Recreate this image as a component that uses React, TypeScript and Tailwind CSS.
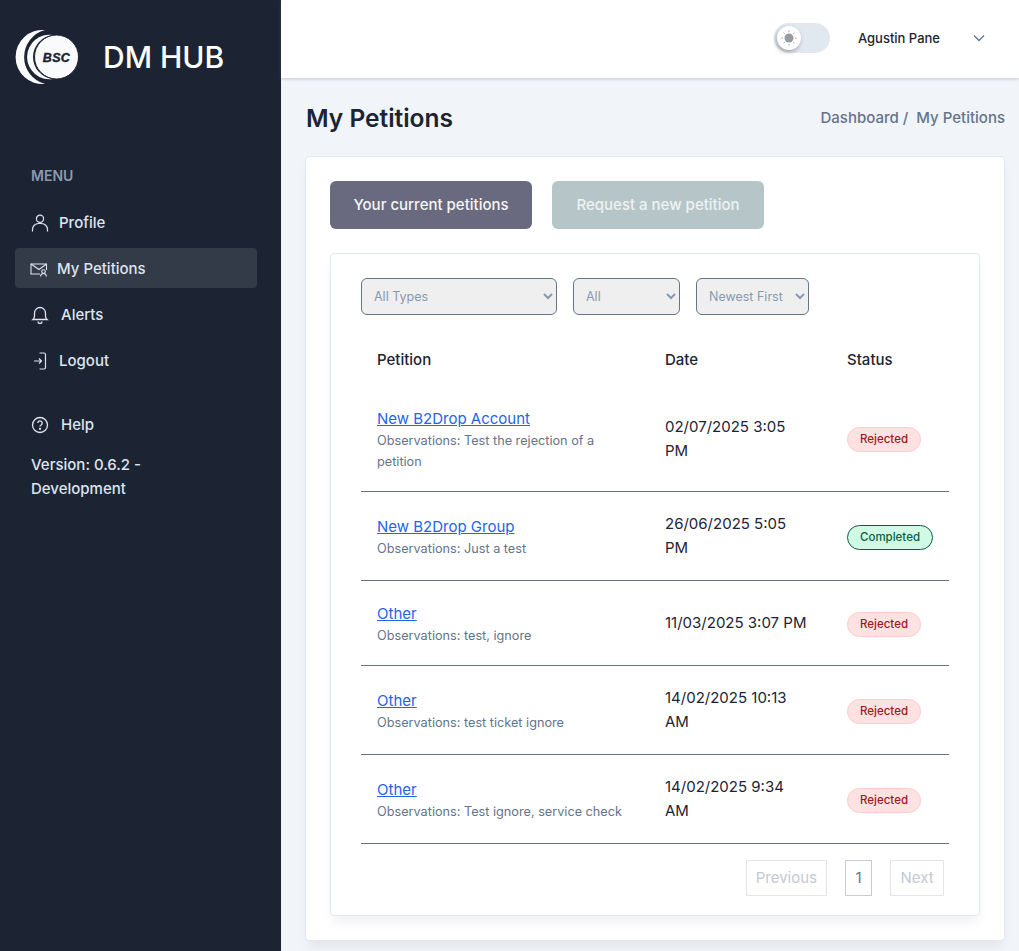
const font = "font-['Inter',sans-serif]";

const rows = [
  { name: "New B2Drop Account", obs: "Observations: Test the rejection of a petition", date: "02/07/2025 3:05 PM", status: "Rejected" },
  { name: "New B2Drop Group", obs: "Observations: Just a test", date: "26/06/2025 5:05 PM", status: "Completed" },
  { name: "Other", obs: "Observations: test, ignore", date: "11/03/2025 3:07 PM", status: "Rejected" },
  { name: "Other", obs: "Observations: test ticket ignore", date: "14/02/2025 10:13 AM", status: "Rejected" },
  { name: "Other", obs: "Observations: Test ignore, service check", date: "14/02/2025 9:34 AM", status: "Rejected" },
];

const Logo = () => (
  <svg width="64" height="56" viewBox="0 0 64 56" className="shrink-0">
    <path d="M30 1 A27.1 27.1 0 1 0 30 55 A27.9 27.900 0 0 1 30 1 Z" fill="#f9fafb" />
    <path d="M38 6 A22.3 22.300 0 1 0 38 50 A22.1 22.100 0 0 1 38 6 Z" fill="#f9fafb" />
    <circle cx="41.5" cy="28" r="22" fill="#f9fafb" stroke="#1c2434" strokeWidth="1" />
    <text x="41.5" y="32.500" textAnchor="middle" fontFamily="Liberation Sans" fontWeight="700" fontStyle="italic" fontSize="12.500" letterSpacing="0.4" stroke="#1c2434" strokeWidth="0.4" fill="#1c2434">BSC</text>
  </svg>
);

const IconUser = () => (
  <svg width="18" height="18" viewBox="0 0 18 18" fill="none" stroke="#dee4ee" strokeWidth="1.2">
    <circle cx="9" cy="4.800" r="3.600" />
    <path d="M1.500 17.500v-2a6 6 0 0 1 6-6h3a6 6 0 0 1 6 6v2" />
  </svg>
);

const IconPetition = () => (
  <svg width="18" height="18" viewBox="0 0 18 18" fill="none" stroke="#dee4ee" strokeWidth="1.1" className="-ml-px">
    <path d="M10 14H1V4h15.500v6" />
    <path d="M1 4l8 5.500L16.500 4" />
    <circle cx="13.500" cy="11.500" r="1.800" />
    <path d="M10.500 16.500c.3-2 1.300-3 3-3s2.700 1 3 3" />
  </svg>
);

const IconBell = () => (
  <svg width="18" height="18" viewBox="0 0 18 18" fill="none" stroke="#dee4ee" strokeWidth="1.3">
    <path d="M2 13.500c1.200-1 1.500-2 1.500-3.500V7a5.500 5.500 0 0 1 11 0v3c0 1.500.3 2.500 1.500 3.500z" />
    <path d="M7 15.500a2 2 0 0 0 4 0" />
  </svg>
);

const IconLogout = () => (
  <svg width="18" height="18" viewBox="0 0 18 18" fill="none" stroke="#dee4ee" strokeWidth="1.2">
    <path d="M8.500 1h4.500a1.500 1.500 0 0 1 1.500 1.500v13a1.500 1.500 0 0 1-1.500 1.500H8.500" />
    <path d="M3 9h7.500M8 6.500L10.500 9 8 11.500" />
  </svg>
);

const IconHelp = () => (
  <svg width="18" height="18" viewBox="0 0 18 18" fill="none" stroke="#dee4ee" strokeWidth="1.3">
    <circle cx="9" cy="9" r="7.500" />
    <path d="M6.800 7a2.200 2.200 0 1 1 3.300 2c-.8.400-1.100.9-1.100 1.600" />
    <circle cx="9" cy="12.800" r=".5" fill="#dee4ee" />
  </svg>
);

const NavItem = ({ icon, label, gap, active }: { icon: React.ReactNode; label: string; gap: string; active?: boolean }) => (
  <a className={`flex h-[40px] items-center rounded-sm px-4 pt-[2px] text-[15px] font-medium text-[#dee4ee] ${gap} ${active ? "bg-[#333a48]" : ""}`}>
    {icon}
    {label}
  </a>
);

const Badge = ({ status }: { status: string }) =>
  status === "Completed" ? (
    <span className="inline-block rounded-full border border-[#065f46] bg-[#d1fae5] px-3 py-[2px] text-[11.5px] font-medium leading-[19px] text-[#065f46]">
      {status}
    </span>
  ) : (
    <span className="inline-block rounded-full border border-[#fecaca] bg-[#fee2e2] px-3 py-[2px] text-[11.5px] font-medium leading-[19px] text-[#991b1b]">
      {status}
    </span>
  );

const selectClass = "h-[37px] rounded-md border border-[#64748b] bg-[#efefef] pl-2 text-[12.5px] text-[#8a99af]";

export default function App() {
  return (
    <div className={`flex min-h-[951px] bg-[#f1f5f9] ${font}`}>
      <aside className="flex w-[281px] shrink-0 flex-col bg-[#1c2434]">
        <div className="flex items-center gap-[24px] pl-[15px] pt-[29px]">
          <Logo />
          <span className="text-[30px] font-medium leading-none text-white">DM HUB</span>
        </div>
        <div className="pl-[15px] pr-[24px] pt-[80px]">
          <h3 className="mb-[15px] pl-4 text-sm font-semibold leading-[22px] text-[#8a99af]">MENU</h3>
          <nav className="flex flex-col gap-[6px]">
            <NavItem icon={<IconUser />} label="Profile" gap="gap-[10px]" />
            <NavItem icon={<IconPetition />} label="My Petitions" gap="gap-[9px]" active />
            <NavItem icon={<IconBell />} label="Alerts" gap="gap-3" />
            <NavItem icon={<IconLogout />} label="Logout" gap="gap-[10px]" />
          </nav>
          <div className="mt-[24px]">
            <NavItem icon={<IconHelp />} label="Help" gap="gap-3" />
          </div>
          <p className="mt-[9px] pl-4 pr-10 text-[15px] font-medium leading-[24px] text-[#dee4ee]">Version: 0.6.2 - Development</p>
        </div>
      </aside>

      <div className="flex min-w-0 flex-1 flex-col">
        <header className="flex h-[78px] items-center justify-end bg-white pb-[2px] pr-[33px] shadow-[0_1px_3px_rgba(100,116,139,0.35)]">
          <div className="relative mr-[28px] h-[30px] w-[56px] rounded-full bg-[#e2e8f0]">
            <span className="absolute left-[3px] top-[3px] flex h-6 w-6 items-center justify-center rounded-full bg-white shadow-[-1px_2px_4px_rgba(0,0,0,0.3)]">
              <svg width="16" height="16" viewBox="0 0 16 16" fill="none" stroke="#969aa1" strokeWidth="1">
                <circle cx="8" cy="8" r="4.500" fill="#969aa1" stroke="none" />
                <path d="M8 .5v1.500M8 14v1.500M.5 8H2M14 8h1.500M2.700 2.700l1 1M12.300 12.300l1 1M2.700 13.300l1-1M12.300 3.700l1-1" />
              </svg>
            </span>
          </div>
          <span className="mt-[2px] text-[13px] font-medium text-[#1c2434]">Agustin Pane</span>
          <svg width="14" height="14" viewBox="0 0 14 14" fill="none" stroke="#64748b" strokeWidth="1.3" className="ml-[32px]">
            <path d="M2 4.500L7 9.500L12 4.500" />
          </svg>
        </header>

        <main className="pl-[24px] pr-[14px] pt-[22px]">
          <div className="mb-[20px] flex items-center justify-between">
            <h2 className="ml-px text-[24.5px] font-semibold leading-[36px] text-[#1c2434]">My Petitions</h2>
            <div className="flex gap-[8px] text-[15px] font-medium text-[#64748b]">
              <span>Dashboard /</span>
              <span>My Petitions</span>
            </div>
          </div>

          <section className="rounded-sm border border-[#e2e8f0] bg-white p-6 shadow-[0_8px_13px_-3px_rgba(0,0,0,0.07)]">
            <div className="flex gap-5">
              <button className="h-12 w-[202px] rounded-md bg-[#69697f] text-[15px] font-medium text-[#f5f5f5]">Your current petitions</button>
              <button className="h-12 w-[212px] rounded-md bg-[#b6c6c8] text-[15px] font-medium text-[#edf2f2]">Request a new petition</button>
            </div>

            <div className="mt-[24px] rounded-sm border border-[#e2e8f0] bg-white px-[30px] pb-[19px] pt-[24px] shadow-[0_8px_13px_-3px_rgba(0,0,0,0.07)]">
              <div className="flex gap-4">
                <select className={`${selectClass} w-[196px]`}><option>All Types</option></select>
                <select className={`${selectClass} w-[107px]`}><option>All</option></select>
                <select className={`${selectClass} w-[113px]`}><option>Newest First</option></select>
              </div>

              <table className="mt-[16px] w-[588px] table-fixed border-collapse text-left">
                <colgroup>
                  <col className="w-[288px]" />
                  <col className="w-[182px]" />
                  <col className="w-[118px]" />
                </colgroup>
                <thead>
                  <tr className="h-[55px] text-[15px] font-medium text-[#1c2434]">
                    <th className="pl-4 pt-[3px] font-medium">Petition</th>
                    <th className="pl-4 pt-[3px] font-medium">Date</th>
                    <th className="pl-4 pt-[3px] font-medium">Status</th>
                  </tr>
                </thead>
                <tbody>
                  {rows.map((r, i) => (
                    <tr key={i} className="border-b border-[#64748b]">
                      <td className="pb-[19px] pl-4 pr-[12px] pt-[21px] align-middle">
                        <a className="block text-[15px] leading-[23px] text-[#2563eb] underline">{r.name}</a>
                        <p className="text-[12.7px] leading-[21px] text-[#64748b]">{r.obs}</p>
                      </td>
                      <td className="py-5 pl-4 pr-[20px] align-middle text-[15px] leading-[24px] text-[#1c2434]">{r.date}</td>
                      <td className="py-5 pl-4 align-middle"><Badge status={r.status} /></td>
                    </tr>
                  ))}
                </tbody>
              </table>

              <div className="mt-4 flex justify-end gap-[18px] pr-[5px] text-[15px] leading-[34px] text-[#c3c9d3]">
                <span className="h-9 border border-[#e2e6ea] px-[9px]">Previous</span>
                <span className="h-9 w-[27px] border border-[#c7ccd4] text-center text-[#64748b]">1</span>
                <span className="h-9 w-[54px] border border-[#e2e6ea] text-center">Next</span>
              </div>
            </div>
          </section>
        </main>
      </div>
    </div>
  );
}
